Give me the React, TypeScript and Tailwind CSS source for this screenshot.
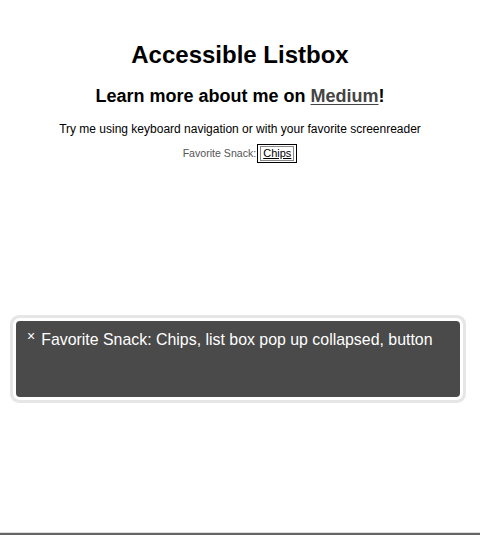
export default function App() {
  return (
    <div
      className="relative h-[535px] w-[480px] overflow-hidden bg-white text-black"
      style={{ fontFamily: '"Liberation Sans", Arial, sans-serif' }}
    >
      {/* Demo page */}
      <div className="flex flex-col items-center pt-[41px]">
        <h1 className="text-[24px] font-bold leading-[28px]">Accessible Listbox</h1>
        <h2 className="mt-[16px] text-[18px] font-bold leading-[22px]">
          Learn more about me on{' '}
          <a href="#" className="text-[#444] underline underline-offset-2">
            Medium
          </a>
          !
        </h2>
        <p className="mt-[15px] text-[12px] leading-[15px]">
          Try me using keyboard navigation or with your favorite screenreader
        </p>
        <div className="mt-[7px] flex items-center text-[10.6px] leading-[13px]">
          <span className="text-[#555]">Favorite Snack:</span>
          <button className="ml-px border border-black px-[2px] py-px">
            <span className="block border border-[#888] px-[2px] text-[11px] text-black underline">Chips</span>
          </button>
        </div>
      </div>

      {/* Screen reader caption panel */}
      <div className="absolute left-[10px] top-[315px] w-[456px] rounded-[9px] bg-[#e6e6e6] p-[3px]">
        <div className="rounded-[7px] bg-white p-[3px]">
          <div className="flex h-[76px] items-start gap-[6px] rounded-[4px] bg-[#4a4a4a] pl-[11px] pr-[6px] pt-[8px] text-white">
            <span className="mt-[1px] text-[14px] leading-[13px]">×</span>
            <span className="whitespace-nowrap text-[15.9px] leading-[21px]">
              Favorite Snack: Chips, list box pop up collapsed, button
            </span>
          </div>
        </div>
      </div>

      {/* Bottom edge */}
      <div className="absolute bottom-0 left-0 w-full">
        <div className="h-px bg-[#dcdcdc]" />
        <div className="h-[2px] bg-[#666]" />
      </div>
    </div>
  )
}
